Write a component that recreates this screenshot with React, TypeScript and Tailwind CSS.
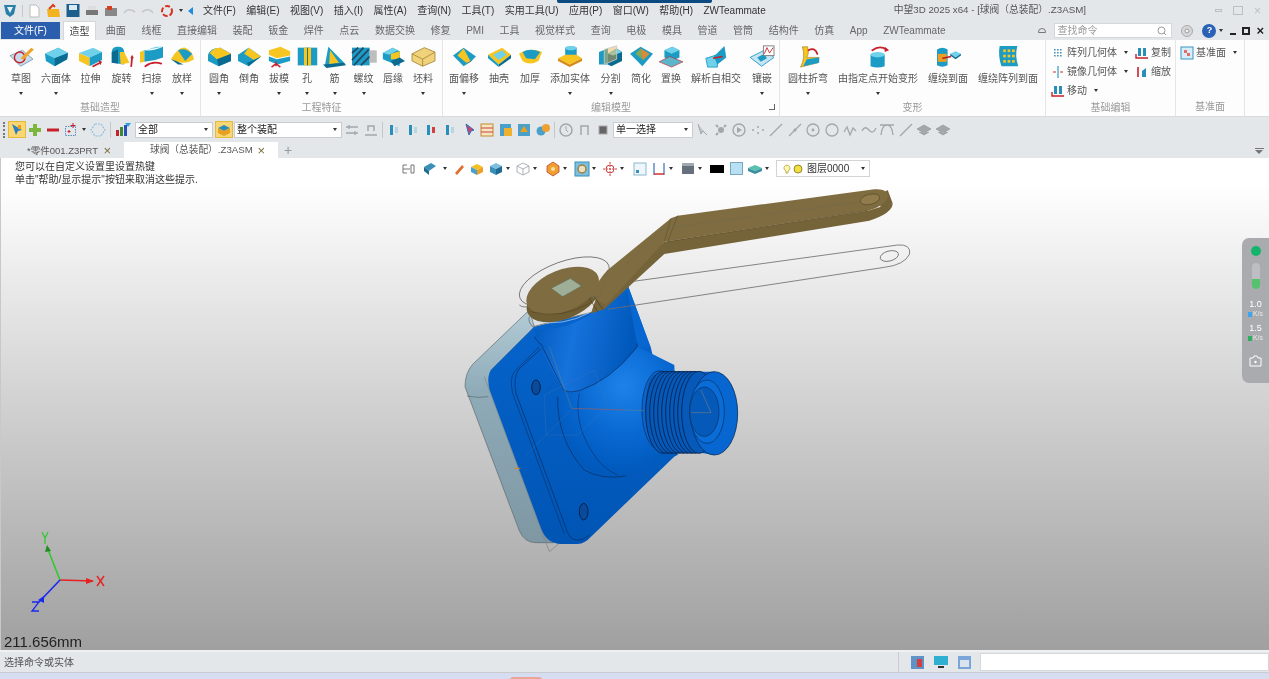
import type { ReactNode } from 'react';

const T = '#1c9cc4';
const D = '#0b6a90';
const L = '#6fd2ea';
const Y = '#f7c520';
const R = '#c8202a';

function Ico({ children, w = 30, h = 26 }: { children: ReactNode; w?: number; h?: number }) {
  return (
    <svg width={Math.round(w * 0.9)} height={Math.round(h * 0.9)} viewBox={`0 0 ${w} ${h}`} className="shrink-0">
      {children}
    </svg>
  );
}

const redArrow = (d: string) => (
  <path d={d} fill="none" stroke={R} strokeWidth="2" strokeLinecap="round" />
);

const icons: Record<string, ReactNode> = {
  sketch: (
    <Ico>
      <path d="M2 12 L16 6 L28 16 L14 24 Z" fill="#c7dcea" stroke="#7d9db5" />
      <circle cx="13" cy="14" r="6" fill="none" stroke={R} strokeWidth="1.6" />
      <path d="M14 15 L26 3 L29 5 L17 17 Z" fill="#f0a22a" />
    </Ico>
  ),
  cube: (
    <Ico>
      <path d="M2 10 L17 3 L28 9 L27 16 L13 24 L3 18 Z" fill={T} />
      <path d="M2 10 L17 3 L28 9 L13 15 Z" fill={L} />
      <path d="M13 15 L28 9 L27 16 L13 24 Z" fill={D} />
    </Ico>
  ),
  extrude: (
    <Ico>
      <path d="M2 9 L14 14 L14 24 L2 18 Z" fill={Y} />
      <path d="M2 9 L18 3 L28 8 L14 14 Z" fill={L} />
      <path d="M14 14 L28 8 L28 17 L14 24 Z" fill={T} />
      {redArrow('M18 24 L26 20')}
      <path d="M24 17 L28 19 L26 23 Z" fill={R} />
    </Ico>
  ),
  revolve: (
    <Ico>
      <path d="M4 8 Q4 2 11 2 Q18 2 18 8 L18 22 L4 20 Z" fill={T} />
      <path d="M11 5 L11 21 L4 20 L4 8 Z" fill={D} />
      <path d="M13 8 L18 8 L24 20 L14 22 Z" fill={Y} />
      {redArrow('M26 24 L27 14')}
      <path d="M25 15 L29 15 L27 11 Z" fill={R} />
    </Ico>
  ),
  sweep: (
    <Ico>
      <path d="M2 8 L7 6 L7 19 L2 20 Z" fill={Y} />
      <path d="M7 6 Q18 7 28 2 L28 14 Q18 18 7 19 Z" fill={T} />
      <path d="M2 8 L20 2 L28 2 L7 6 Z" fill={L} />
      {redArrow('M8 24 Q16 18 26 21')}
    </Ico>
  ),
  loft: (
    <Ico>
      <path d="M2 16 Q10 2 18 3 Q26 6 28 16 Q16 24 2 16 Z" fill={Y} />
      <path d="M10 6 Q18 2 26 10 L18 18 Z" fill={T} />
      <path d="M2 16 Q10 18 16 22 L10 22 Z" fill={D} />
    </Ico>
  ),
  fillet: (
    <Ico>
      <path d="M2 11 Q5 3 16 3 L28 10 L28 18 L14 24 L2 18 Z" fill={T} />
      <path d="M4 9 Q8 3 16 3 L28 10 Q22 16 12 16 Z" fill={Y} />
      <path d="M12 16 L28 10 L28 18 L14 24 Z" fill={D} />
    </Ico>
  ),
  chamfer: (
    <Ico>
      <path d="M2 11 L14 3 L28 13 L14 24 L2 18 Z" fill={T} />
      <path d="M9 10 L14 3 L28 13 L20 17 Z" fill={Y} />
      <path d="M14 24 L28 13 L20 17 L12 20 Z" fill={D} />
    </Ico>
  ),
  draft: (
    <Ico>
      <path d="M3 6 L16 2 L27 7 L27 12 L12 15 L3 11 Z" fill={Y} />
      <path d="M3 13 L12 16 L27 13 L27 18 L13 22 L3 18 Z" fill={T} />
      <path d="M11 19 L11 24 M6 25 L11 21 L16 25" stroke={R} strokeWidth="1.6" fill="none" />
    </Ico>
  ),
  hole: (
    <Ico>
      <rect x="4" y="3" width="22" height="20" fill={T} />
      <rect x="11" y="3" width="8" height="20" fill={Y} />
      <rect x="14.5" y="3" width="1" height="20" fill={D} />
    </Ico>
  ),
  rib: (
    <Ico>
      <path d="M8 2 L26 20 L4 24 Z" fill={T} />
      <path d="M10 6 L20 20 L9 22 Z" fill={Y} />
      <path d="M2 22 L26 20 L28 23 L6 26 Z" fill={D} />
    </Ico>
  ),
  thread: (
    <Ico w={32}>
      <rect x="3" y="3" width="20" height="20" fill={T} />
      <path d="M3 9 L10 3 M3 17 L16 3 M5 23 L22 5 M13 23 L23 13" stroke="#234a6a" strokeWidth="2" />
      <rect x="23" y="6" width="8" height="14" fill="#bdbdbd" />
    </Ico>
  ),
  lip: (
    <Ico>
      <path d="M3 9 L14 3 L22 7 L22 24 L3 16 Z" fill={T} />
      <path d="M12 10 L22 7 L22 16 L12 16 Z" fill={Y} />
      <path d="M12 18 L22 14 L28 18 L16 24 Z" fill={D} />
      <path d="M3 9 L14 3 L20 6 L10 11 Z" fill={L} />
    </Ico>
  ),
  stock: (
    <Ico>
      <path d="M2 10 L16 3 L28 8 L28 18 L14 24 L2 18 Z" fill="#f0d27a" stroke="#a88a3a" />
      <path d="M2 10 L14 16 L28 8 M14 16 L14 24" stroke="#a88a3a" fill="none" />
    </Ico>
  ),
  offset: (
    <Ico>
      <path d="M2 12 L14 3 L28 13 L14 24 Z" fill={T} />
      <path d="M7 12 L14 4 L22 19 L17 20 Z" fill={Y} />
      <path d="M14 24 L28 13 L22 19 Z" fill={D} />
    </Ico>
  ),
  shell: (
    <Ico>
      <path d="M2 11 L18 3 L28 11 L14 22 Z" fill={Y} />
      <path d="M8 11 L18 6 L23 11 L14 17 Z" fill={L} />
      <path d="M2 11 L14 22 L14 25 L2 15 Z" fill={T} />
      <path d="M14 22 L28 11 L28 15 L14 25 Z" fill={D} />
    </Ico>
  ),
  thicken: (
    <Ico>
      <path d="M2 10 Q14 2 28 8 L24 18 Q14 24 6 18 Z" fill={Y} />
      <path d="M6 8 Q15 3 26 8 L20 16 L10 15 Z" fill={T} />
    </Ico>
  ),
  addSolid: (
    <Ico>
      <path d="M9 3 Q16 0 22 3 L22 14 Q16 16 9 14 Z" fill={T} />
      <ellipse cx="15.5" cy="3.5" rx="6.5" ry="2.5" fill={L} />
      <path d="M1 15 L9 11 L22 11 L28 15 L14 22 Z" fill={Y} />
      <path d="M1 15 L14 22 L28 15 L28 18 L14 25 L1 18 Z" fill="#d68a1c" />
    </Ico>
  ),
  split: (
    <Ico>
      <path d="M2 8 L12 4 L12 22 L2 22 Z" fill={T} />
      <path d="M12 10 L22 4 L28 8 L28 18 L16 24 L12 22 Z" fill={D} />
      <path d="M12 10 L22 4 L28 8 L18 12 Z" fill={L} />
      <path d="M8 5 L22 1 L22 16 L8 22 Z" fill="#e8b04a" fillOpacity="0.45" stroke="#c8c8c8" />
    </Ico>
  ),
  simplify: (
    <Ico>
      <path d="M2 10 L14 2 L28 10 L16 24 Z" fill={T} />
      <path d="M8 10 L14 4 L24 10 L17 17 Z" fill="#7ea85a" />
      <path d="M14 4 L24 10 L17 17 Z" fill="#d98a3a" />
    </Ico>
  ),
  replace: (
    <Ico>
      <path d="M7 6 L16 2 L24 6 L24 14 L15 18 L7 14 Z" fill={T} />
      <path d="M7 6 L16 2 L24 6 L15 10 Z" fill={L} />
      <path d="M1 19 L13 13 L28 19 L15 25 Z" fill="#5bb6cc" stroke={R} strokeWidth="0.7" />
    </Ico>
  ),
  resolve: (
    <Ico>
      <path d="M3 15 L16 11 L16 25 L5 25 Z" fill={L} stroke={T} />
      <path d="M12 13 L24 1 L26 14 L16 22 Z" fill={T} />
      <path d="M11 15 L22 13" stroke={R} strokeWidth="1.6" />
    </Ico>
  ),
  inlay: (
    <Ico>
      <path d="M1 14 L17 6 L28 14 L14 24 Z" fill="#c7e4f0" stroke={T} />
      <path d="M9 14 L17 10 L20 15 L13 19 Z" fill={T} />
      <rect x="16" y="1" width="12" height="11" fill="#fff" stroke="#777" />
      <path d="M17 10 L20 3 L23 9 L27 3" fill="none" stroke={R} />
    </Ico>
  ),
  cylBend: (
    <Ico>
      <path d="M8 2 L14 2 Q16 10 13 14 L27 14 L26 20 L6 25 Q12 14 8 2 Z" fill={Y} stroke="#8a6a10" strokeWidth="0.6" />
      <path d="M13 16 L27 14 L27 20 L9 24 Z" fill={T} />
      {redArrow('M15 6 Q22 2 25 10')}
    </Ico>
  ),
  deform: (
    <Ico>
      <path d="M6 11 L22 11 L22 24 Q14 27 6 24 Z" fill={T} />
      <ellipse cx="14" cy="11" rx="8" ry="3" fill={L} />
      {redArrow('M8 6 Q16 0 24 5')}
      <path d="M22 2 L27 6 L22 8 Z" fill={R} />
    </Ico>
  ),
  wrap: (
    <Ico>
      <path d="M2 5 Q8 1 14 5 L14 23 Q8 26 2 23 Z" fill={T} />
      <rect x="3" y="10" width="10" height="9" fill="#e8a020" />
      <path d="M8 15 L18 13" stroke={R} strokeWidth="2" />
      <path d="M17 10 L23 7 L29 10 L23 14 Z" fill={L} />
      <path d="M17 10 L23 14 L29 10 L29 12 L23 16 L17 12 Z" fill={D} />
    </Ico>
  ),
  wrapArr: (
    <Ico>
      <path d="M5 1 L25 1 Q22 12 26 24 L7 24 Q3 12 5 1 Z" fill={T} />
      <rect x="9" y="5" width="3" height="3" fill={Y} />
      <rect x="14" y="5" width="3" height="3" fill={Y} />
      <rect x="19" y="5" width="3" height="3" fill={Y} />
      <rect x="9" y="11" width="3" height="3" fill={Y} />
      <rect x="14" y="11" width="3" height="3" fill={Y} />
      <rect x="19" y="11" width="3" height="3" fill={Y} />
      <rect x="9" y="17" width="3" height="3" fill={Y} />
      <rect x="14" y="17" width="3" height="3" fill={Y} />
      <rect x="19" y="17" width="3" height="3" fill={Y} />
    </Ico>
  ),
};

type RibbonItem = { label: string; icon: string; w: string; arrow?: boolean };

const groups: { title: string; w: string; pl: string; items: RibbonItem[] }[] = [
  {
    title: '基础造型',
    w: 'w-[201px]',
    pl: 'pl-[4px]',
    items: [
      { label: '草图', icon: 'sketch', w: 'w-[34px]', arrow: true },
      { label: '六面体', icon: 'cube', w: 'w-[36px]', arrow: true },
      { label: '拉伸', icon: 'extrude', w: 'w-[33px]' },
      { label: '旋转', icon: 'revolve', w: 'w-[29px]' },
      { label: '扫掠', icon: 'sweep', w: 'w-[31px]', arrow: true },
      { label: '放样', icon: 'loft', w: 'w-[30px]', arrow: true },
    ],
  },
  {
    title: '工程特征',
    w: 'w-[242px]',
    pl: 'pl-[3px]',
    items: [
      { label: '圆角', icon: 'fillet', w: 'w-[30px]', arrow: true },
      { label: '倒角', icon: 'chamfer', w: 'w-[30px]' },
      { label: '拔模', icon: 'draft', w: 'w-[30px]', arrow: true },
      { label: '孔', icon: 'hole', w: 'w-[26px]', arrow: true },
      { label: '筋', icon: 'rib', w: 'w-[29px]', arrow: true },
      { label: '螺纹', icon: 'thread', w: 'w-[29px]', arrow: true },
      { label: '唇缘', icon: 'lip', w: 'w-[30px]' },
      { label: '坯料', icon: 'stock', w: 'w-[30px]', arrow: true },
    ],
  },
  {
    title: '编辑模型',
    w: 'w-[337px]',
    pl: 'pl-[2px]',
    items: [
      { label: '面偏移', icon: 'offset', w: 'w-[38px]', arrow: true },
      { label: '抽壳', icon: 'shell', w: 'w-[32px]' },
      { label: '加厚', icon: 'thicken', w: 'w-[30px]' },
      { label: '添加实体', icon: 'addSolid', w: 'w-[50px]', arrow: true },
      { label: '分割', icon: 'split', w: 'w-[31px]', arrow: true },
      { label: '简化', icon: 'simplify', w: 'w-[30px]' },
      { label: '置换', icon: 'replace', w: 'w-[30px]' },
      { label: '解析自相交', icon: 'resolve', w: 'w-[60px]' },
      { label: '镶嵌', icon: 'inlay', w: 'w-[32px]', arrow: true },
    ],
  },
  {
    title: '变形',
    w: 'w-[266px]',
    pl: 'pl-[2px]',
    items: [
      { label: '圆柱折弯', icon: 'cylBend', w: 'w-[52px]', arrow: true },
      { label: '由指定点开始变形', icon: 'deform', w: 'w-[88px]', arrow: true },
      { label: '缠绕到面', icon: 'wrap', w: 'w-[52px]' },
      { label: '缠绕阵列到面', icon: 'wrapArr', w: 'w-[68px]' },
    ],
  },
];

const menus = [
  '文件(F)',
  '编辑(E)',
  '视图(V)',
  '插入(I)',
  '属性(A)',
  '查询(N)',
  '工具(T)',
  '实用工具(U)',
  '应用(P)',
  '窗口(W)',
  '帮助(H)',
  'ZWTeammate',
];

const tabs = [
  '曲面',
  '线框',
  '直接编辑',
  '装配',
  '钣金',
  '焊件',
  '点云',
  '数据交换',
  '修复',
  'PMI',
  '工具',
  '视觉样式',
  '查询',
  '电极',
  '模具',
  '管道',
  '管筒',
  '结构件',
  '仿真',
  'App',
  'ZWTeammate',
];

function Caret({ className = '' }: { className?: string }) {
  return (
    <span
      className={`inline-block h-0 w-0 border-x-[2.5px] border-t-[3px] border-x-transparent border-t-[#333] ${className}`}
    />
  );
}

function RibbonButton({ item }: { item: RibbonItem }) {
  return (
    <div className={`flex h-[60px] shrink-0 flex-col items-center pt-[3px] ${item.w}`}>
      <div className="flex h-[26px] items-center justify-center">{icons[item.icon]}</div>
      <div className="mt-[3px] h-[14px] whitespace-nowrap text-[10px] leading-[14px] text-[#555]">
        {item.label}
      </div>
      {item.arrow && <Caret className="mt-[6px]" />}
    </div>
  );
}

function Small({ children }: { children: ReactNode }) {
  return (
    <svg width="14" height="14" viewBox="0 0 14 14" className="shrink-0">
      {children}
    </svg>
  );
}

function SmallRow({ icon, label, arrow }: { icon: ReactNode; label: string; arrow?: boolean }) {
  return (
    <div className="flex h-[19px] items-center gap-[2px] whitespace-nowrap text-[10px] text-[#555]">
      {icon}
      <span>{label}</span>
      {arrow && <Caret className="ml-[5px]" />}
    </div>
  );
}

const arrayIco = (
  <Small>
    <path d="M3 3h1.6v1.6H3zM6 3h1.6v1.6H6zM9 3h1.6v1.6H9zM3 6h1.6v1.6H3zM6 6h1.6v1.6H6zM9 6h1.6v1.6H9zM3 9h1.6v1.6H3zM6 9h1.6v1.6H6zM9 9h1.6v1.6H9z" fill="#4a8fb5" />
  </Small>
);
const mirrorIco = (
  <Small>
    <path d="M7 1V13" stroke="#49a8c8" strokeWidth="1.4" />
    <path d="M2 7h3M9 7h3" stroke="#e07070" strokeWidth="1.4" />
  </Small>
);
const moveIco = (
  <Small>
    <path d="M3 2h3v8H3zM8 2h3v8H8z" fill="#2a8fb8" />
    <path d="M1 8v4h12" fill="none" stroke={R} strokeWidth="1.4" />
  </Small>
);
const scaleIco = (
  <Small>
    <path d="M3 2v10" stroke={R} strokeWidth="1.6" />
    <path d="M7 6l4-3v9H7z" fill="#2a8fb8" />
  </Small>
);

function SmallGroups() {
  return (
    <>
      <div className="flex w-[130px] shrink-0 flex-col border-r border-[#e6e6e6]">
        <div className="flex h-[60px] pl-[5px] pt-[3px]">
          <div className="w-[84px]">
            <SmallRow icon={arrayIco} label="阵列几何体" arrow />
            <SmallRow icon={mirrorIco} label="镜像几何体" arrow />
            <SmallRow icon={moveIco} label="移动" arrow />
          </div>
          <div className="w-[40px]">
            <SmallRow icon={moveIco} label="复制" />
            <SmallRow icon={scaleIco} label="缩放" />
          </div>
        </div>
        <div className="h-[17px] text-center text-[10px] leading-[15px] text-[#999]">基础编辑</div>
      </div>
      <div className="flex w-[69px] shrink-0 flex-col border-r border-[#e6e6e6]">
        <div className="h-[60px] pl-[4px] pt-[3px]">
          <SmallRow
            icon={
              <Small>
                <rect x="1" y="1" width="12" height="12" fill="#d6eefa" stroke="#3c93c0" />
                <path d="M4 4h3v3H4zM7 7h3v3H7z" fill="#e46a6a" />
              </Small>
            }
            label="基准面"
            arrow
          />
        </div>
        <div className="h-[17px] text-center text-[10px] leading-[15px] text-[#999]">基准面</div>
      </div>
    </>
  );
}

function Tool({ children }: { children: ReactNode }) {
  return (
    <svg width="16" height="16" viewBox="0 0 16 16" className="shrink-0">
      {children}
    </svg>
  );
}

const G = '#a3a7ab';

const grayTools: ReactNode[] = [
  <Tool key="a">
    <circle cx="8" cy="8" r="6" fill="none" stroke={G} strokeWidth="1.5" />
    <path d="M8 4v4l2 2" fill="none" stroke={G} />
  </Tool>,
  <Tool key="b">
    <path d="M4 13V4h7v9" fill="none" stroke={G} strokeWidth="1.5" />
  </Tool>,
];

const rightTools: ReactNode[] = [
  <path key="0" d="M4 2l3 10 2-3 4 4" fill="#c2c5c8" stroke={G} />,
  <g key="1"><circle cx="8" cy="8" r="3" fill={G} /><path d="M3 3l2 2M13 3l-2 2M3 13l2-2" stroke={G} strokeWidth="2" /></g>,
  <g key="2"><circle cx="8" cy="8" r="6" fill="none" stroke={G} strokeWidth="1.4" /><path d="M6 5l5 3-5 3z" fill={G} /></g>,
  <path key="3" d="M2 8h2M7 5h2M7 11h2M12 8h2" stroke={G} strokeWidth="1.6" />,
  <path key="4" d="M2 14L14 2" stroke={G} strokeWidth="1.3" />,
  <g key="5"><path d="M2 14L14 2" stroke={G} strokeWidth="1.3" /><circle cx="8" cy="8" r="1.6" fill={G} /></g>,
  <g key="6"><circle cx="8" cy="8" r="6" fill="none" stroke={G} strokeWidth="1.3" /><circle cx="8" cy="8" r="1.4" fill={G} /></g>,
  <circle key="7" cx="8" cy="8" r="6" fill="none" stroke={G} strokeWidth="1.3" />,
  <path key="8" d="M2 10L5 5l3 8 3-7 3 3" fill="none" stroke={G} strokeWidth="1.3" />,
  <path key="9" d="M1 9Q4 3 8 8t7-2" fill="none" stroke={G} strokeWidth="1.3" />,
  <path key="10" d="M2 13Q3 3 8 3t6 10M1 3h14" fill="none" stroke={G} strokeWidth="1.3" />,
  <path key="11" d="M2 14L14 2" stroke={G} strokeWidth="1.5" />,
  <path key="12" d="M1 7l7-4 7 4-7 4zM3 10l5 3 5-3" fill={G} stroke="#8e9296" strokeWidth="0.6" />,
  <path key="13" d="M1 7l7-4 7 4-7 4zM3 10l5 3 5-3" fill={G} stroke="#8e9296" strokeWidth="0.6" />,
];

function Combo({ text, className }: { text: string; className: string }) {
  return (
    <div
      className={`flex h-[16px] shrink-0 items-center justify-between border border-[#c9cdd1] bg-white pl-[2px] pr-[4px] text-[10px] text-[#222] ${className}`}
    >
      <span>{text}</span>
      <Caret />
    </div>
  );
}

function Divider() {
  return <div className="h-[16px] w-px shrink-0 bg-[#c3c7cb]" />;
}

function Toolbar() {
  return (
    <div className="flex h-[25px] items-center bg-[#e4e7ea] pl-[3px]">
      <div className="h-[16px] w-[2px] border-l-2 border-dotted border-[#777]" />
      <div className="ml-[3px] flex h-[17px] w-[18px] items-center justify-center border border-[#e8b93a] bg-[#fbd774]">
        <Tool>
          <path d="M3 2l4 11 2-4 4-1z" fill="#2c7fc0" />
          <path d="M9 3h3v4H9z" fill="#e8a020" />
        </Tool>
      </div>
      <div className="w-[1px]" />
      <Tool>
        <path d="M6 2h4v4h4v4h-4v4H6v-4H2V6h4z" fill="#7cb63c" />
      </Tool>
      <div className="w-[2px]" />
      <Tool>
        <rect x="2" y="6.5" width="12" height="3" fill={R} />
      </Tool>
      <div className="w-[2px]" />
      <Tool>
        <rect x="2.5" y="4.5" width="10" height="9" fill="none" stroke="#5a8db8" strokeDasharray="1.5 1" />
        <path d="M10 1v5M7.5 3.5h5" stroke={R} />
        <path d="M6 8v3M4.5 9.5h3" stroke={R} />
      </Tool>
      <Caret className="ml-[3px]" />
      <div className="w-[4px]" />
      <Tool>
        <path d="M5 2h6l4 6-4 6H5L1 8z" fill="none" stroke="#8cbfe0" strokeWidth="1.2" strokeDasharray="2 1" />
      </Tool>
      <div className="mx-[4px]"><Divider /></div>
      <Tool>
        <rect x="1" y="8" width="3" height="6" fill={R} />
        <rect x="5" y="5" width="3" height="9" fill="#3a8a3a" />
        <rect x="9" y="3" width="3" height="11" fill="#2a4fb8" />
        <path d="M10 1h6l-3 4z" fill="#2aa0d8" />
      </Tool>
      <Combo text="全部" className="ml-[4px] w-[78px]" />
      <div className="ml-[2px] flex h-[17px] w-[18px] shrink-0 items-center justify-center border border-[#e8b93a] bg-[#fbd774]">
        <Tool>
          <path d="M2 6l6-3 6 3-6 3z" fill="#2a8fb8" />
          <path d="M2 6v5l6 3 6-3V6L8 9z" fill="#e8a020" />
        </Tool>
      </div>
      <Combo text="整个装配" className="ml-[1px] w-[108px]" />
      <div className="ml-[2px] flex w-[35px] justify-between">
        <Tool>
          <path d="M2 5h12M2 11h12M5 3v4M11 9v4" stroke={G} strokeWidth="1.3" />
        </Tool>
        <Tool>
          <path d="M5 9V4h6v5M2 13h12" stroke={G} strokeWidth="1.5" fill="none" />
        </Tool>
      </div>
      <div className="mx-[3px]"><Divider /></div>
      <div className="flex w-[165px] justify-between">
        {[0, 1, 2, 3].map((i) => (
          <Tool key={i}>
            <path d="M4 3h3v10H4z" fill="#2a8fb8" />
            <path d="M9 5h3v6H9z" fill={i === 2 ? '#d04040' : '#b9d5e2'} />
          </Tool>
        ))}
        <Tool>
          <path d="M5 2l3 11 2-4 3-1z" fill="#d04070" stroke="#2a6fb8" />
        </Tool>
        <Tool>
          <rect x="2" y="2" width="12" height="12" fill="#f4e6c0" stroke="#c88a30" />
          <path d="M2 6h12M2 10h12" stroke="#d04040" />
        </Tool>
        <Tool>
          <rect x="2" y="2" width="11" height="12" fill="#4aa0c8" />
          <rect x="6" y="6" width="8" height="8" fill="#f0b030" />
        </Tool>
        <Tool>
          <rect x="2" y="2" width="12" height="12" fill="#4aa0c8" />
          <path d="M4 10l4-6 4 6z" fill="#e8a020" />
        </Tool>
        <Tool>
          <circle cx="6" cy="9" r="4.5" fill="#4aa0c8" />
          <circle cx="11" cy="6" r="4" fill="#f0a030" />
        </Tool>
      </div>
      <div className="mx-[3px]"><Divider /></div>
      <div className="flex w-[53px] justify-between">
        {grayTools}
        <Tool>
          <rect x="4" y="4" width="8" height="8" fill="#666" stroke="#aaa" />
        </Tool>
      </div>
      <Combo text="单一选择" className="ml-[2px] w-[80px]" />
      <div className="ml-[1px] flex w-[257px] justify-between">
        {rightTools.map((t, i) => (
          <Tool key={i}>{t}</Tool>
        ))}
      </div>
    </div>
  );
}

function ViewBar() {
  const c = <Caret className="mx-[2px]" />;
  return (
    <div className="absolute left-[399px] top-[2px] flex h-[17px] items-center">
      <Tool>
        <path d="M7 4H3v8h4M14 4h-3v8h3V4zM3 8h7" fill="none" stroke="#777" />
      </Tool>
      <div className="w-[6px]" />
      <Tool>
        <path d="M2 6l7-4 5 3-7 5z" fill="#3a8fb8" />
        <path d="M2 6l5 4v4l-5-4z" fill="#1f6a90" />
      </Tool>
      <div className="w-[3px]" />
      {c}
      <div className="w-[2px]" />
      <Tool>
        <path d="M4 12l7-8 2 2-7 8z" fill="#e07030" />
      </Tool>
      <div className="w-[2px]" />
      <Tool>
        <path d="M2 6l6-3 6 3-6 3z" fill="#f0c020" />
        <path d="M2 6l6 3v5l-6-3z" fill="#4aa0c8" />
        <path d="M14 6L8 9v5l6-3z" fill="#f0a020" />
      </Tool>
      <div className="w-[3px]" />
      <Tool>
        <path d="M2 5l6-3 6 3-6 3z" fill="#7cc0e0" />
        <path d="M2 5l6 3v6l-6-3z" fill="#3a8fb8" />
        <path d="M14 5L8 8v6l6-3z" fill="#1f6a90" />
      </Tool>
      {c}
      <div className="w-[3px]" />
      <Tool>
        <path d="M2 5l6-3 6 3v6l-6 3-6-3zM2 5l6 3 6-3M8 8v6" fill="#fff" stroke="#98a0a8" strokeWidth="0.8" />
      </Tool>
      {c}
      <div className="w-[6px]" />
      <Tool>
        <path d="M8 1l6 4v6l-6 4-6-4V5z" fill="#f0a030" stroke="#b83020" strokeWidth="0.7" />
        <circle cx="8" cy="8" r="2" fill="#f8e0a0" />
      </Tool>
      {c}
      <div className="w-[5px]" />
      <Tool>
        <rect x="1" y="1" width="14" height="14" fill="#7cc0e0" stroke="#3a8fb8" />
        <circle cx="8" cy="8" r="4" fill="#e8e0c0" stroke="#a08040" strokeWidth="1.5" />
      </Tool>
      {c}
      <div className="w-[4px]" />
      <Tool>
        <circle cx="8" cy="8" r="4" fill="none" stroke="#d04040" />
        <path d="M8 1v14M1 8h14" stroke="#d04040" strokeDasharray="2 1" />
      </Tool>
      {c}
      <div className="w-[6px]" />
      <Tool>
        <rect x="2" y="2" width="12" height="12" fill="#eef6fb" stroke="#8cb8d0" />
        <rect x="4" y="9" width="3" height="3" fill="#3a8fb8" />
      </Tool>
      <div className="w-[3px]" />
      <Tool>
        <path d="M3 2v12M13 2v12" stroke="#3a6fb8" strokeWidth="1.2" />
        <path d="M3 13h10" stroke="#d03030" strokeWidth="1.5" />
      </Tool>
      {c}
      <div className="w-[5px]" />
      <Tool>
        <rect x="2" y="2" width="12" height="11" fill="#66707c" />
        <rect x="2" y="2" width="12" height="3" fill="#a0a8b0" />
      </Tool>
      {c}
      <div className="w-[6px]" />
      <div className="h-[8px] w-[14px] bg-black" />
      <div className="w-[6px]" />
      <div className="h-[13px] w-[13px] border border-[#7aa8c0] bg-[#b8e0f4]" />
      <div className="w-[4px]" />
      <Tool>
        <path d="M1 7l7-3 7 3-7 3z" fill="#5ac0b0" />
        <path d="M1 7l7 3 7-3v3l-7 3-7-3z" fill="#3a8fa0" />
      </Tool>
      {c}
      <div className="ml-[5px] flex h-[17px] w-[94px] items-center justify-between border border-[#d2d5d8] bg-white pl-[5px] pr-[4px] text-[10px] text-[#333]">
        <span className="flex items-center gap-[3px]">
          <svg width="22" height="12" viewBox="0 0 22 12">
            <path d="M4 8a3 3 0 1 1 2 0v2H4z" fill="#fff6b0" stroke="#b0a040" strokeWidth="0.8" />
            <circle cx="16" cy="6" r="4" fill="#f0e040" stroke="#807020" strokeWidth="0.8" />
          </svg>
          图层0000
        </span>
        <Caret />
      </div>
    </div>
  );
}

function Triad() {
  return (
    <svg width="120" height="100" viewBox="0 0 120 100" className="absolute left-0 top-[370px]">
      <path d="M59 52L92 53" stroke="#e82020" strokeWidth="1.6" />
      <path d="M85 50l8 3-8 3z" fill="#e82020" />
      <path d="M59 52L46 19" stroke="#32c832" strokeWidth="1.6" />
      <path d="M44 24l2-7 4 6z" fill="#228a22" />
      <path d="M59 52L38 74" stroke="#1828f0" strokeWidth="1.6" />
      <path d="M37 72l6-4 0 7z" fill="#1828f0" />
      <path d="M96 48l7 10M103 48l-7 10" stroke="#e82020" strokeWidth="1.4" fill="none" />
      <path d="M41 4l3 6 3-6M44 10v6" stroke="#32c832" strokeWidth="1.3" fill="none" />
      <path d="M31 74h7l-7 9h7" stroke="#1828f0" strokeWidth="1.3" fill="none" />
    </svg>
  );
}

// valve model, coordinates are taken straight from a 3x crop of the viewport
function Valve() {
  const rings = [628, 640, 652, 664, 676, 688, 700, 712, 724, 736];
  return (
    <svg
      width="470"
      height="380"
      viewBox="0 0 1410 1140"
      className="absolute left-[450px] top-[22px]"
    >
      <defs>
        <linearGradient id="plate" x1="0" y1="0" x2="0" y2="1">
          <stop offset="0" stopColor="#b3ccd6" />
          <stop offset="0.35" stopColor="#8fabb8" />
          <stop offset="1" stopColor="#7e97a3" />
        </linearGradient>
        <linearGradient id="body" x1="0" y1="0" x2="0" y2="1">
          <stop offset="0" stopColor="#0766cf" />
          <stop offset="1" stopColor="#0055b4" />
        </linearGradient>
        <linearGradient id="neck" x1="0" y1="0" x2="1" y2="0.2">
          <stop offset="0" stopColor="#0058ba" />
          <stop offset="0.45" stopColor="#1672dc" />
          <stop offset="1" stopColor="#0058ba" />
        </linearGradient>
        <radialGradient id="ball" cx="0.55" cy="0.3" r="0.7">
          <stop offset="0" stopColor="#1c82ea" />
          <stop offset="0.6" stopColor="#0766cf" />
          <stop offset="1" stopColor="#0058ba" />
        </radialGradient>
      </defs>

      {/* translucent back plate */}
      <path
        d="M235 390 L65 553 Q42 580 42 620 L205 1052 Q220 1088 255 1088 L310 1088 L120 570 L250 440 Z"
        fill="url(#plate)"
        stroke="#59666e"
        strokeWidth="2"
      />
      <path d="M48 648 Q80 655 112 650" fill="none" stroke="#59666e" strokeWidth="2" />
      <path d="M100 590 L295 1115 L325 1090" fill="none" stroke="#7c8286" strokeWidth="2" />

      {/* flange */}
      <path
        d="M250 440 L120 570 Q106 590 116 630 L272 1050 Q288 1090 330 1092 L380 1092 Q402 1090 420 1070 L675 825 L600 505 L530 315 L430 395 Z"
        fill="url(#body)"
      />
      <path d="M530 315 L600 505 L560 500 L500 340 Z" fill="#0766cf" />
      <path
        d="M282 495 L205 566 Q185 590 195 640 L350 1058 Q362 1088 395 1078 L415 1065"
        fill="none"
        stroke="#0a2a5a"
        strokeWidth="2"
      />
      <path d="M265 500 L190 575 Q175 595 185 640 L340 1062" fill="none" stroke="#0a2a5a" strokeWidth="1.6" />
      <ellipse cx="255" cy="622" rx="13" ry="22" fill="#0a4a9a" stroke="#06224a" strokeWidth="3" />
      <ellipse cx="398" cy="995" rx="13" ry="25" fill="#0a4a9a" stroke="#06224a" strokeWidth="3" />

      {/* ball */}
      <path
        d="M320 640 L560 500 L670 555 L680 825 L520 890 Q440 890 400 860 Q320 770 320 640 Z"
        fill="url(#ball)"
      />
      <path d="M320 650 Q318 780 400 870 Q450 900 525 888" fill="none" stroke="#0a2a5a" strokeWidth="2" />
      <path d="M385 640 Q365 740 440 840 Q465 870 500 885" fill="none" stroke="#0a2a5a" strokeWidth="1.6" />

      {/* neck */}
      <path
        d="M250 450 Q350 450 430 395 L528 330 L560 500 Q480 600 380 635 Q345 645 330 620 L260 490 Z"
        fill="url(#neck)"
      />
      <path d="M250 470 Q262 490 270 492 L335 625 Q345 642 385 632 Q480 600 552 508 Q562 498 558 490" fill="none" stroke="#0a2a5a" strokeWidth="2" />

      {/* threaded port */}
      <path d="M610 575 L790 575 L790 825 L640 800 Z" fill="#0760c6" />
      <ellipse cx="625" cy="690" rx="52" ry="118" fill="#0a66cf" stroke="#0a2a5a" strokeWidth="2" />
      <ellipse cx="615" cy="690" rx="30" ry="105" fill="none" stroke="#0a2a5a" strokeWidth="1.6" />
      {rings.map((x) => (
        <ellipse key={x} cx={x + 8} cy="697" rx="52" ry="123" fill="#0659b8" stroke="#05204a" strokeWidth="2.5" />
      ))}
      <ellipse cx="790" cy="700" rx="70" ry="125" fill="#0766cf" stroke="#06305f" strokeWidth="2.5" />
      <ellipse cx="768" cy="695" rx="52" ry="95" fill="#0a6cd6" stroke="#06305f" strokeWidth="2" />
      <ellipse cx="760" cy="695" rx="44" ry="74" fill="#0559b8" stroke="#06305f" strokeWidth="2" />
      <path d="M750 630 L780 698 L720 698" fill="none" stroke="#6f7a88" strokeWidth="2" />

      {/* origin wire box and axes sitting over the body */}
      <path d="M295 500 L362 685 L580 692" fill="none" stroke="#7d8c6f" strokeWidth="1.5" opacity="0.8" />
      <path d="M360 690 L260 790 L225 825 M280 645 L430 570 L470 680 L380 765 L285 765 Z" fill="none" stroke="#4a78b0" strokeWidth="1.2" opacity="0.7" />
      <path d="M365 685 L520 690" stroke="#a04860" strokeWidth="2" opacity="0.7" />
      <path d="M190 865 H208" stroke="#d98a20" strokeWidth="3" />

      {/* wire copy of the handle */}
      <g fill="none" stroke="#6e6e6e" strokeWidth="2.5">
        <path d="M540 305 L1340 195 Q1380 192 1376 222 Q1360 255 1300 262 L470 388" />
        <ellipse cx="1315" cy="228" rx="28" ry="15" transform="rotate(-15 1315 228)" />
        <ellipse cx="340" cy="305" rx="142" ry="60" transform="rotate(-20 340 305)" />
        <path d="M205 375 Q215 385 240 378 M235 410 Q230 425 245 440 L430 395" />
      </g>

      {/* handle */}
      <ellipse cx="336" cy="355" rx="115" ry="62" transform="rotate(-22 336 355)" fill="#6f5e34" />
      <path
        d="M440 340 L640 185 L1250 92 L1325 70 Q1325 100 1255 122 L640 222 L460 388 L420 400 Z"
        fill="#75633a"
      />
      <path d="M1310 30 L1325 70 L1290 85 L1280 50 Z" fill="#75633a" />
      <path
        d="M660 115 L680 107 L1270 28 Q1310 25 1312 50 Q1300 80 1250 92 L640 185 L465 375 L420 350 Q440 300 470 270 Z"
        fill="#7f6c40"
      />
      <ellipse cx="335" cy="332" rx="115" ry="62" transform="rotate(-22 335 332)" fill="#7f6c40" />
      <path d="M660 115 L640 185 M680 107 L650 185 L1250 92" fill="none" stroke="#5a4a28" strokeWidth="1.5" />
      <path d="M470 270 L445 350 L420 350 M480 300 L640 145 L1230 65" fill="none" stroke="#6e6a55" strokeWidth="1.5" />
      <path d="M415 355 L440 395 M430 350 L455 388" fill="none" stroke="#4a3d20" strokeWidth="2" />
      <ellipse cx="1257" cy="58" rx="30" ry="15" transform="rotate(-14 1257 58)" fill="#8f7c4a" stroke="#5a4a28" strokeWidth="2" />
      <path d="M300 325 L358 295 L392 318 L335 350 Z" fill="#9fae96" stroke="#5c6a55" strokeWidth="2" />
      <path d="M240 395 Q330 420 420 368" fill="none" stroke="#4a3d20" strokeWidth="1.6" />
      <path d="M245 425 Q340 440 415 398" fill="none" stroke="#c0d8f0" strokeWidth="2" />
    </svg>
  );
}

function SidePanel() {
  return (
    <div className="absolute right-0 top-[80px] flex h-[145px] w-[27px] flex-col items-center rounded-l-[7px] bg-[#a9abae] pt-[8px] text-white">
      <div className="h-[10px] w-[10px] rounded-full bg-[#14b46c]" />
      <div className="mt-[7px] flex h-[26px] w-[8px] flex-col justify-end overflow-hidden rounded-full bg-[#bcbec1]">
        <div className="h-[10px] bg-[#57c26e]" />
      </div>
      <div className="mt-[10px] text-[9px] leading-[11px]">1.0</div>
      <div className="flex items-center text-[7px] leading-[8px] text-[#e8e8e8]">
        <span className="mr-[1px] h-[5px] w-[4px] bg-[#3fa6ee]" />
        K/s
      </div>
      <div className="mt-[5px] text-[9px] leading-[11px]">1.5</div>
      <div className="flex items-center text-[7px] leading-[8px] text-[#e8e8e8]">
        <span className="mr-[1px] h-[5px] w-[4px] bg-[#2cb060]" />
        K/s
      </div>
      <svg width="13" height="12" viewBox="0 0 13 12" className="mt-[13px]">
        <path d="M1 3h3l1-2h3l1 2h3v8H1z" fill="none" stroke="#fff" />
        <circle cx="6.5" cy="7" r="1.2" fill="#fff" />
      </svg>
    </div>
  );
}

export default function App() {
  return (
    <div className="relative h-[679px] w-[1269px] overflow-hidden bg-[#e4e7ea] blur-[0.5px] [font-family:'Liberation_Sans','Noto_Sans_CJK_SC',sans-serif]">
      {/* title bar */}
      <div className="flex h-[21px] items-center text-[10px] text-[#333]">
        <div className="flex w-[199px] shrink-0 items-center justify-between pl-[3px] pr-[6px]">
          <svg width="14" height="15" viewBox="0 0 14 15">
            <path d="M1 2h12l-2 9-4 3-4-3z" fill="#2a7fa8" />
            <path d="M4 4h6l-3 6z" fill="#e8f2f6" />
          </svg>
          <div className="h-[12px] w-px bg-[#c3c7cb]" />
          <svg width="12" height="14" viewBox="0 0 12 14">
            <path d="M2 1h6l3 3v9H2z" fill="#fff" stroke="#bbb" />
          </svg>
          <svg width="15" height="15" viewBox="0 0 15 15">
            <path d="M1 6h12l1 8H2z" fill="#f3b21f" />
            <path d="M3 6l4-4 2 2" fill="none" stroke="#d8401c" strokeWidth="2" />
          </svg>
          <svg width="14" height="15" viewBox="0 0 14 15">
            <rect x="0.5" y="1" width="13" height="13" fill="#1d5f8c" />
            <rect x="3" y="2" width="8" height="5" fill="#d8eaf6" />
          </svg>
          <svg width="14" height="13" viewBox="0 0 14 13">
            <path d="M1 6h12v5H1z" fill="#777" />
            <path d="M3 2h8v4H3z" fill="#ddd" />
          </svg>
          <svg width="14" height="14" viewBox="0 0 14 14">
            <rect x="1" y="4" width="12" height="8" fill="#888" />
            <path d="M3 2h5v4H3z" fill="#d8401c" />
          </svg>
          <svg width="13" height="10" viewBox="0 0 13 10">
            <path d="M1 7Q5 1 12 6" fill="none" stroke="#c4c6c8" strokeWidth="1.6" />
          </svg>
          <svg width="13" height="10" viewBox="0 0 13 10">
            <path d="M12 7Q8 1 1 6" fill="none" stroke="#c4c6c8" strokeWidth="1.6" />
          </svg>
          <svg width="14" height="14" viewBox="0 0 14 14">
            <circle cx="7" cy="7" r="5" fill="none" stroke="#d83020" strokeWidth="2" strokeDasharray="5 2" />
          </svg>
          <Caret />
          <span className="h-0 w-0 border-y-[4px] border-r-[5px] border-y-transparent border-r-[#1e8ae0]" />
        </div>
        <div className="ml-[4px] flex gap-[10.4px] whitespace-nowrap">
          {menus.map((m) => (
            <span key={m}>{m}</span>
          ))}
        </div>
        <div className="ml-[128px] whitespace-nowrap text-[9.75px] text-[#555]">中望3D 2025 x64 - [球阀（总装配）.Z3ASM]</div>
        <div className="ml-auto flex w-[54px] items-center justify-between pr-[8px] text-[#bcc0c4]">
          <div className="h-[3px] w-[7px] border border-[#bcc0c4]" />
          <div className="h-[9px] w-[10px] border border-[#bcc0c4]" />
          <span className="text-[12px] leading-none">×</span>
        </div>
      </div>

      {/* ribbon tabs */}
      <div className="flex h-[19px] items-end text-[10px] text-[#666]">
        <div className="ml-[1px] flex h-[17px] w-[59px] items-center justify-center self-center bg-[#2b5fae] text-white">
          文件(F)
        </div>
        <div className="ml-[3px] flex h-[19px] w-[33px] items-center justify-center border-x border-t border-[#d5d8db] bg-white text-[#444]">
          造型
        </div>
        <div className="ml-[2px] flex h-[19px] items-center whitespace-nowrap">
          {tabs.map((t) => (
            <span key={t} className="px-[7.8px]">
              {t}
            </span>
          ))}
        </div>
        <div className="ml-auto flex h-[19px] items-center pr-[5px]">
          <span className="mr-[8px] h-[5px] w-[8px] rounded-t-full border border-[#777]" />
          <div className="flex h-[15px] w-[118px] items-center justify-between border border-[#d5d8db] bg-white pl-[2px] pr-[4px] text-[#999]">
            查找命令
            <svg width="10" height="10" viewBox="0 0 10 10">
              <circle cx="4.5" cy="4.5" r="3.5" fill="none" stroke="#999" />
              <path d="M7 7l2 2" stroke="#999" />
            </svg>
          </div>
          <svg width="14" height="14" viewBox="0 0 14 14" className="ml-[8px]">
            <circle cx="7" cy="7" r="5.5" fill="#d6d8da" stroke="#aaa" />
            <circle cx="7" cy="7" r="2" fill="#f4f4f4" stroke="#999" />
          </svg>
          <div className="ml-[8px] flex h-[14px] w-[14px] items-center justify-center rounded-full bg-[#2a62b8] text-[9px] font-bold text-white">
            ?
          </div>
          <Caret className="ml-[3px]" />
          <div className="ml-[7px] mt-[6px] h-[2px] w-[6px] bg-[#222]" />
          <div className="ml-[6px] h-[8px] w-[8px] border-2 border-[#222]" />
          <span className="ml-[6px] text-[13px] font-bold leading-none text-[#222]">×</span>
        </div>
      </div>

      {/* ribbon */}
      <div className="flex h-[77px] border-b border-[#d9dcdf] bg-[#fdfdfd]">
        {groups.map((g) => (
          <div key={g.title} className={`relative flex shrink-0 flex-col border-r border-[#e6e6e6] ${g.w}`}>
            <div className={`flex h-[60px] ${g.pl}`}>
              {g.items.map((item) => (
                <RibbonButton key={item.label} item={item} />
              ))}
            </div>
            <div className="h-[17px] text-center text-[10px] leading-[15px] text-[#999]">{g.title}</div>
            {g.title === '编辑模型' && (
              <div className="absolute bottom-[6px] right-[4px] h-[6px] w-[6px] border-b border-r border-[#666]" />
            )}
          </div>
        ))}
        <SmallGroups />
      </div>

      <Toolbar />

      {/* document tabs */}
      <div className="flex h-[16px] items-end text-[10px] text-[#555]">
        <div className="flex w-[124px] items-center justify-between pl-[27px] pr-[13px]">
          <span className="whitespace-nowrap text-[9.5px]">*零件001.Z3PRT</span>
          <span className="text-[13px] leading-none text-[#7a6a3a]">×</span>
        </div>
        <div className="flex h-[16px] w-[154px] items-center justify-between bg-white pl-[26px] pr-[13px]">
          <span className="whitespace-nowrap text-[9.7px]">球阀（总装配）.Z3ASM</span>
          <span className="text-[13px] leading-none text-[#7a6a3a]">×</span>
        </div>
        <span className="ml-[6px] text-[14px] leading-[16px] text-[#999]">+</span>
        <div className="ml-auto mb-[4px] mr-[5px] flex flex-col gap-[1px]">
          <div className="h-px w-[9px] bg-[#777]" />
          <div className="h-0 w-0 border-x-[4.5px] border-t-[4px] border-x-transparent border-t-[#777]" />
        </div>
      </div>

      {/* viewport */}
      <div className="relative h-[492px] border-l border-[#c6c9cc] bg-gradient-to-b from-white from-[5%] to-[#a0a0a0]">
        <div className="pl-[14px] pt-[2px] text-[10px] leading-[13px] text-[#333]">
          <div>您可以在自定义设置里设置热键</div>
          <div>单击"帮助/显示提示"按钮来取消这些提示.</div>
        </div>
        <ViewBar />
        <Valve />
        <Triad />
        <SidePanel />
        <div className="absolute bottom-[-1px] left-[3px] text-[15px] leading-[18px] text-[#222]">211.656mm</div>
      </div>

      {/* status bar */}
      <div className="flex h-[23px] items-center border-b border-[#c8ccd0] border-t-2 border-t-[#eef0f2] text-[10px] text-[#555]">
        <span className="pl-[4px]">选择命令或实体</span>
        <div className="ml-auto flex items-center">
          <div className="mr-[12px] h-[20px] w-px bg-[#c8ccd0]" />
          <svg width="13" height="13" viewBox="0 0 13 13">
            <rect width="13" height="13" fill="#5f93c8" />
            <rect x="6" y="3" width="5" height="8" fill="#d04040" />
          </svg>
          <svg width="14" height="13" viewBox="0 0 14 13" className="ml-[10px]">
            <rect width="14" height="9" fill="#2fb0d0" />
            <rect x="4" y="10" width="6" height="2" fill="#333" />
          </svg>
          <svg width="13" height="13" viewBox="0 0 13 13" className="ml-[10px]">
            <rect width="13" height="13" fill="#7aa5d8" />
            <rect x="2" y="4" width="9" height="7" fill="#dbe4ee" />
          </svg>
          <div className="ml-[9px] h-[18px] w-[289px] border border-[#d6d9dc] bg-white" />
        </div>
      </div>

      {/* bottom strip under the app window */}
      <div className="relative h-[7px] bg-[#d6ddf1]">
        <div className="absolute bottom-0 left-[510px] h-[3px] w-[32px] rounded-t-[3px] bg-[#eaa59a]" />
      </div>

      {/* taskbar sliver hanging over the title bar */}
      <div className="absolute left-[557px] top-0 h-[3px] w-[155px] rounded-b-[2px] bg-[#0b4a80]" />
    </div>
  );
}
